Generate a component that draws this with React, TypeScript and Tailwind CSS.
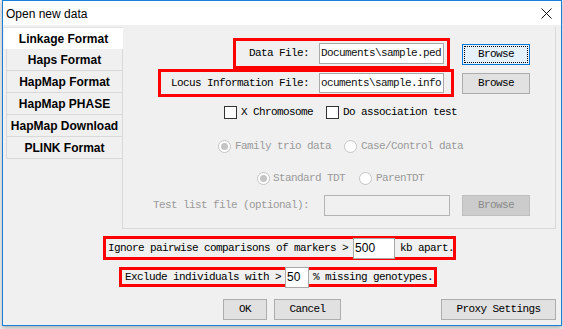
import React from "react";

const mono =
  "font-['Liberation_Mono',monospace] text-[11px] tracking-[-0.6px] leading-[13px] whitespace-nowrap";

function Field({ w, h, text, sans }: { w: string; h: string; text?: string; sans?: boolean }) {
  return (
    <div
      className={`${w} ${h} shrink-0 bg-white border border-[#a9a9a9] flex items-center pl-[1px] overflow-hidden relative`}
    >
      {text ? (
        <span
          className={
            sans
              ? "font-['Liberation_Sans',Arial,sans-serif] text-[12px] leading-[13px] text-black"
              : `${mono} text-[#111]`
          }
        >
          {text}
        </span>
      ) : null}
    </div>
  );
}

function Btn({
  w,
  label,
  variant = "normal",
}: {
  w: string;
  label: string;
  variant?: "normal" | "focus" | "disabled";
}) {
  const base = `${w} h-[21px] shrink-0 flex items-center justify-center ${mono}`;
  if (variant === "focus")
    return (
      <div
        className={`${base} bg-[#e5f1fb] border border-[#0078d7] outline-1 outline-dotted outline-black outline-offset-[-3px] text-black`}
      >
        {label}
      </div>
    );
  if (variant === "disabled")
    return (
      <div className={`${base} bg-[#cccccc] border border-[#bfbfbf] text-[#8a8a8a]`}>{label}</div>
    );
  return (
    <div className={`${base} bg-[#e1e1e1] border border-[#adadad] text-black`}>{label}</div>
  );
}

function Check() {
  return <div className="w-[13px] h-[13px] shrink-0 bg-white border border-[#333333]" />;
}

function Radio({ on }: { on?: boolean }) {
  return (
    <svg width="13" height="13" viewBox="0 0 13 13" className="shrink-0">
      <circle cx="6.5" cy="6.5" r="6" fill="#ffffff" stroke="#c4c4c4" strokeWidth="1" />
      {on ? <circle cx="6.5" cy="6.5" r="3.5" fill="#c4c4c4" /> : null}
    </svg>
  );
}

const tabs = ["Haps Format", "HapMap Format", "HapMap PHASE", "HapMap Download", "PLINK Format"];

export default function App() {
  return (
    <div className="w-[563px] h-[329px] bg-[#eeeeee] pl-[2px] overflow-hidden">
      <div className="w-[560px] h-[326px] border border-[#1a7fd6] bg-[#f0f0f0] flex flex-col shadow-[0_2px_4px_rgba(0,0,0,0.25)]">
        {/* title bar */}
        <div className="h-[24px] bg-white flex items-center justify-between pl-[3px] pr-[9px] shrink-0">
          <span className="font-['Liberation_Sans',Arial,sans-serif] text-[12px] text-black leading-[14px] mt-[1px]">
            Open new data
          </span>
          <svg width="11" height="11" viewBox="0 0 11 11" className="mt-[1px]">
            <path d="M0.5 0.5 L10.5 10.5 M10.5 0.5 L0.5 10.5" stroke="#111" strokeWidth="1" />
          </svg>
        </div>

        {/* body */}
        <div className="flex flex-col pt-[2px]">
          <div className="flex h-[202px]">
            {/* tabs column */}
            <div className="w-[119px] shrink-0 flex flex-col font-['Liberation_Sans',Arial,sans-serif] text-[12px] font-bold text-black">
              <div className="ml-[1px] w-[119px] h-[22px] bg-white flex items-center justify-center relative z-10 -mr-[1px] border-t border-[#e3e3e3]">
                Linkage Format
              </div>
              {tabs.map((t) => (
                <div
                  key={t}
                  className="ml-[3px] w-[116px] h-[22px] border-l border-b border-[#d9d9d9] flex items-center justify-center"
                >
                  {t}
                </div>
              ))}
            </div>

            {/* panel */}
            <div className="w-[434px] h-[202px] border-l border-r border-b border-[#d9d9d9] flex flex-col">
              {/* Data File */}
              <div className="flex items-center mt-[11px] ml-[110px]">
                <div className="w-[217px] h-[31px] border-[3px] border-[#ff0000] flex items-center pl-[13px]">
                  <span className={`${mono} text-black w-[60px]`}>Data File:</span>
                  <div className="ml-[10px]">
                    <Field w="w-[125px]" h="h-[21px]" text="Documents\sample.ped" />
                  </div>
                </div>
                <div className="ml-[12px] mt-[1px]">
                  <Btn w="w-[68px]" label="Browse" variant="focus" />
                </div>
              </div>

              {/* Locus */}
              <div className="flex items-center ml-[35px]">
                <div className="w-[296px] h-[28px] border-[3px] border-[#ff0000] flex items-center pl-[10px]">
                  <span className={`${mono} text-black w-[138px]`}>Locus Information File:</span>
                  <div className="ml-[10px]">
                    <Field w="w-[125px]" h="h-[20px]" text="ocuments\sample.info" />
                  </div>
                </div>
                <div className="ml-[8px]">
                  <Btn w="w-[68px]" label="Browse" />
                </div>
              </div>

              {/* checkboxes */}
              <div className={`flex items-center h-[13px] mt-[9px] ml-[101px] ${mono} text-black`}>
                <Check />
                <span className="ml-[4px] w-[72px]">X Chromosome</span>
                <div className="ml-[13px]">
                  <Check />
                </div>
                <span className="ml-[4px]">Do association test</span>
              </div>

              {/* radios 1 */}
              <div className={`flex items-center h-[13px] mt-[21px] ml-[95px] ${mono} text-[#9a9a9a]`}>
                <Radio on />
                <span className="ml-[4px] w-[96px]">Family trio data</span>
                <div className="ml-[13px]">
                  <Radio />
                </div>
                <span className="ml-[4px]">Case/Control data</span>
              </div>

              {/* radios 2 */}
              <div className={`flex items-center h-[13px] mt-[19px] ml-[134px] ${mono} text-[#9a9a9a]`}>
                <Radio on />
                <span className="ml-[3px] w-[72px]">Standard TDT</span>
                <div className="ml-[14px]">
                  <Radio />
                </div>
                <span className="ml-[4px]">ParenTDT</span>
              </div>

              {/* test list */}
              <div className="flex items-center mt-[10px] ml-[30px]">
                <span className={`${mono} text-[#9a9a9a] w-[162px]`}>Test list file (optional):</span>
                <div className="ml-[9px] w-[126px] h-[21px] bg-[#f0f0f0] border border-[#b4b4b4]" />
                <div className="ml-[12px]">
                  <Btn w="w-[68px]" label="Browse" variant="disabled" />
                </div>
              </div>
            </div>
          </div>

          {/* Ignore */}
          <div className="mt-[7px] ml-[100px] w-[353px] h-[24px] border-[3px] border-[#ff0000] flex items-center pl-[2px]">
            <span className={`${mono} text-black`}>Ignore pairwise comparisons of markers &gt;</span>
            <div className="ml-[5px]">
              <Field w="w-[42px]" h="h-[21px]" text="500" sans />
            </div>
            <span className={`${mono} text-black ml-[5px]`}>kb apart.</span>
          </div>

          {/* Exclude */}
          <div className="mt-[7px] ml-[116px] w-[318px] h-[20px] border-[3px] border-[#ff0000] flex items-center pl-[3px]">
            <span className={`${mono} text-black`}>Exclude individuals with &gt;</span>
            <div className="ml-[4px]">
              <Field w="w-[24px]" h="h-[21px]" text="50" sans />
            </div>
            <span className={`${mono} text-black ml-[4px]`}>% missing genotypes.</span>
          </div>

          {/* buttons */}
          <div className="flex mt-[12px] ml-[220px]">
            <Btn w="w-[44px]" label="OK" />
            <div className="ml-[7px]">
              <Btn w="w-[67px]" label="Cancel" />
            </div>
            <div className="ml-[100px]">
              <Btn w="w-[115px]" label="Proxy Settings" />
            </div>
          </div>
        </div>
      </div>
    </div>
  );
}
